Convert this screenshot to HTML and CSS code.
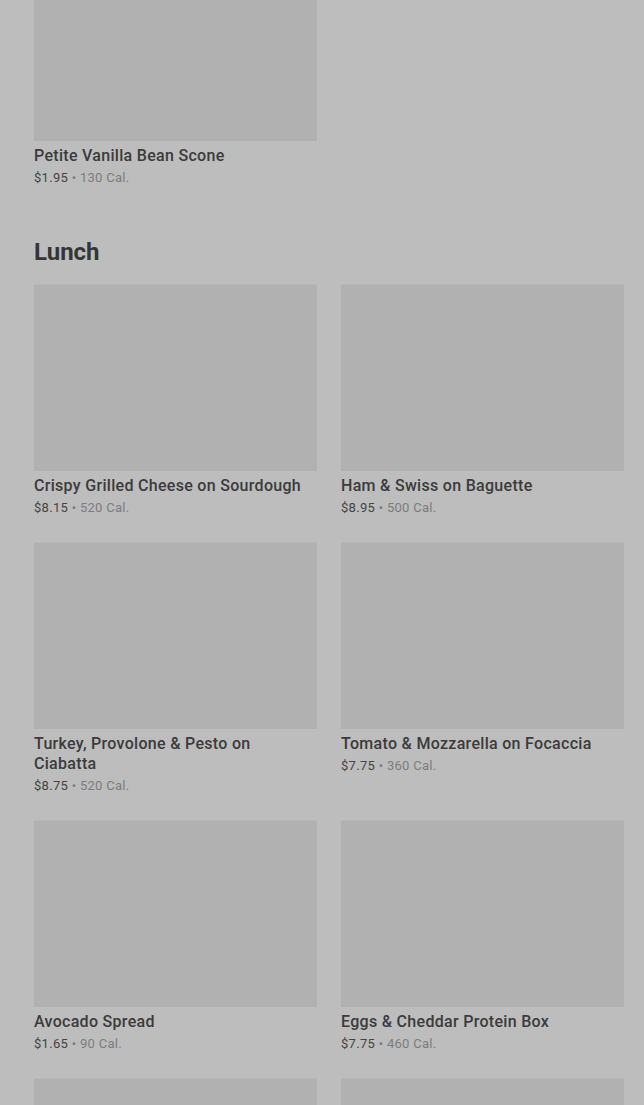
FILE: index.html
```html
<!DOCTYPE html>
<html lang="en">
<head>
    <meta charset="UTF-8">
    <meta name="viewport" content="width=device-width, initial-scale=1.0">
    <title>Menu</title>
    <link rel="stylesheet" href="styles.css">
</head>
<body>

    <div class="page">
        <section class="section section-top">
            <div class="grid">
                <div class="card">
                    <div class="card-img"></div>
                    <p class="name">Petite Vanilla Bean Scone</p>
                    <p class="meta"><span class="price">$1.95</span> • 130 Cal.</p>
                </div>
            </div>
        </section>

        <section class="section">
            <h2 class="heading">Lunch</h2>
            <div class="grid">
                <div class="card">
                    <div class="card-img"></div>
                    <p class="name">Crispy Grilled Cheese on Sourdough</p>
                    <p class="meta"><span class="price">$8.15</span> • 520 Cal.</p>
                </div>
                <div class="card">
                    <div class="card-img"></div>
                    <p class="name">Ham &amp; Swiss on Baguette</p>
                    <p class="meta"><span class="price">$8.95</span> • 500 Cal.</p>
                </div>
                <div class="card">
                    <div class="card-img"></div>
                    <p class="name">Turkey, Provolone &amp; Pesto on Ciabatta</p>
                    <p class="meta"><span class="price">$8.75</span> • 520 Cal.</p>
                </div>
                <div class="card">
                    <div class="card-img"></div>
                    <p class="name">Tomato &amp; Mozzarella on Focaccia</p>
                    <p class="meta"><span class="price">$7.75</span> • 360 Cal.</p>
                </div>
                <div class="card">
                    <div class="card-img"></div>
                    <p class="name">Avocado Spread</p>
                    <p class="meta"><span class="price">$1.65</span> • 90 Cal.</p>
                </div>
                <div class="card">
                    <div class="card-img"></div>
                    <p class="name">Eggs &amp; Cheddar Protein Box</p>
                    <p class="meta"><span class="price">$7.75</span> • 460 Cal.</p>
                </div>
                <div class="card">
                    <div class="card-img"></div>
                </div>
                <div class="card">
                    <div class="card-img"></div>
                </div>
            </div>
        </section>
    </div>

</body>
</html>
```

FILE: styles.css
```css
body {
    font-family: Roboto, "Liberation Sans", sans-serif;
    margin: 0;
    padding: 0;
    background-color: #bdbdbd;
    overflow: hidden;
}
.page {
    padding: 0 20px 0 34px;
}
.section-top {
    margin-top: -46px;
    margin-bottom: 49px;
}
.heading {
    margin: 0 0 16px;
    font-size: 24px;
    line-height: 32px;
    font-weight: 700;
    color: #363636;
}
.grid {
    display: grid;
    grid-template-columns: 283px 283px;
    column-gap: 24px;
    row-gap: 25px;
}
.card-img {
    height: 187px;
    background-color: #b1b1b1;
    box-shadow: inset 0 1px 0 rgba(255, 255, 255, 0.08);
}
.name {
    margin: 5px 0 0;
    font-size: 16px;
    line-height: 20px;
    font-weight: 500;
    color: #3b3b3b;
    letter-spacing: 0.3px;
}
.meta {
    margin: 3px 0 0;
    font-size: 13px;
    line-height: 18px;
    color: #7c7c7c;
    letter-spacing: 0.3px;
}
.price {
    color: #444;
}
```
